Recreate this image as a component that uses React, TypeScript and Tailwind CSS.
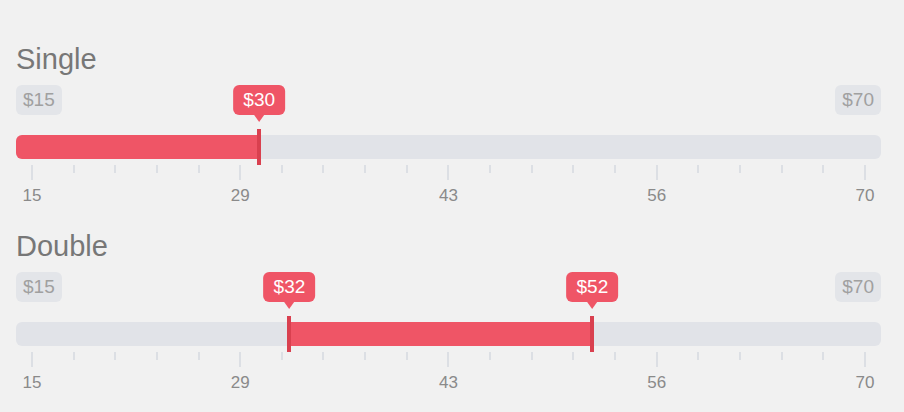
import React from "react";

const MIN = 15;
const MAX = 70;
const LABELS = [15, 29, 43, 56, 70];

// position along the track (track has 16px inner padding on each side)
function frac(v: number) {
  return (v - MIN) / (MAX - MIN);
}
function pos(v: number) {
  return `calc(16px + ${frac(v)} * (100% - 32px))`;
}

function Tooltip({ value }: { value: number }) {
  return (
    <div
      className="absolute top-0 -translate-x-1/2 flex flex-col items-center"
      style={{ left: pos(value) }}
    >
      <div className="h-[30px] px-[10px] rounded-md bg-[#ef5566] text-white text-[19px] leading-[30px]">
        ${value}
      </div>
      <div className="w-0 h-0 border-x-[5px] border-x-transparent border-t-[7px] border-t-[#ef5566]" />
    </div>
  );
}

function Handle({ value }: { value: number }) {
  return (
    <div
      className="absolute -top-1.5 h-9 w-1 -ml-0.5 bg-[#d9404f]"
      style={{ left: pos(value) }}
    />
  );
}

function Slider({ title, values }: { title: string; values: number[] }) {
  const range = values.length === 2;
  return (
    <section className="mb-[22px]">
      <h2 className="text-[29px] leading-8 text-[#777]">{title}</h2>

      {/* badges + tooltips */}
      <div className="relative mt-[10px] h-[30px] flex justify-between">
        <span className="h-[30px] px-[7px] rounded-md bg-[#e3e5e9] text-[#a0a0a0] text-[19px] leading-[30px]">
          ${MIN}
        </span>
        <span className="h-[30px] px-[7px] rounded-md bg-[#e3e5e9] text-[#a0a0a0] text-[19px] leading-[30px]">
          ${MAX}
        </span>
        {values.map((v) => (
          <Tooltip key={v} value={v} />
        ))}
      </div>

      {/* track */}
      <div className="relative mt-5 h-6 rounded-md bg-[#e1e3e8]">
        {range ? (
          <div
            className="absolute top-0 h-6 bg-[#ef5566]"
            style={{
              left: pos(values[0]),
              width: `calc(${frac(values[1]) - frac(values[0])} * (100% - 32px))`,
            }}
          />
        ) : (
          <div
            className="absolute left-0 top-0 h-6 rounded-l-md bg-[#ef5566]"
            style={{ width: pos(values[0]) }}
          />
        )}
        {values.map((v) => (
          <Handle key={v} value={v} />
        ))}
      </div>

      {/* ticks */}
      <div className="mt-1.5 px-[15px] flex justify-between items-start">
        {Array.from({ length: 21 }).map((_, i) => (
          <div
            key={i}
            className={i % 5 === 0 ? "w-0.5 h-[15px] bg-[#dcdfe4]" : "w-0.5 h-2 bg-[#dcdfe4]"}
          />
        ))}
      </div>

      {/* labels */}
      <div className="mt-1 px-[15px] flex justify-between">
        {LABELS.map((l) => (
          <div key={l} className="w-0.5 flex justify-center">
            <span className="whitespace-nowrap text-[17px] leading-6 text-[#8a8a8a]">{l}</span>
          </div>
        ))}
      </div>
    </section>
  );
}

export default function App() {
  return (
    <div className="w-[904px] h-[412px] overflow-hidden bg-[#f1f1f1] pl-4 pr-[23px] pt-[43px] font-['Liberation_Sans',Arial,sans-serif]">
      <Slider title="Single" values={[30]} />
      <Slider title="Double" values={[32, 52]} />
    </div>
  );
}
